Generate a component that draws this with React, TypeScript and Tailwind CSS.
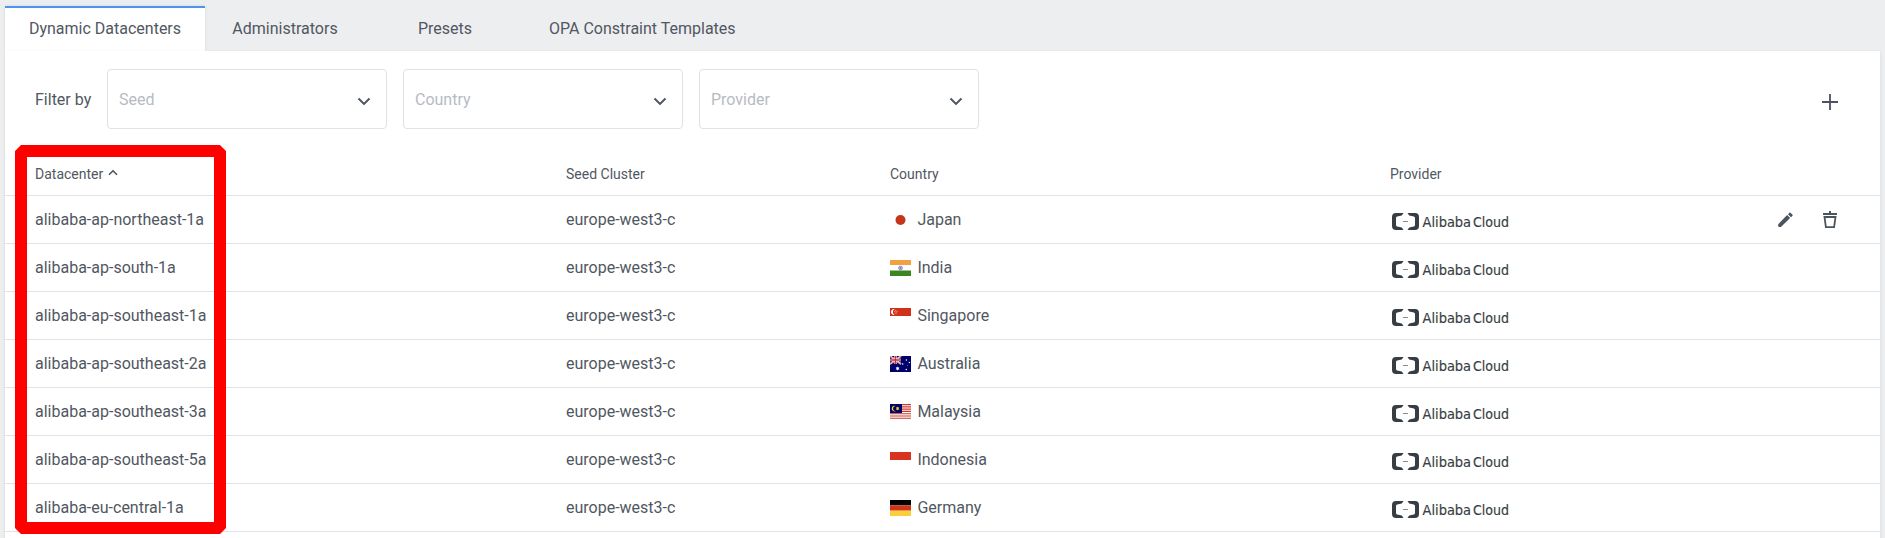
import React from "react";

const rows = [
  ["alibaba-ap-northeast-1a", "Japan"],
  ["alibaba-ap-south-1a", "India"],
  ["alibaba-ap-southeast-1a", "Singapore"],
  ["alibaba-ap-southeast-2a", "Australia"],
  ["alibaba-ap-southeast-3a", "Malaysia"],
  ["alibaba-ap-southeast-5a", "Indonesia"],
  ["alibaba-eu-central-1a", "Germany"],
];

const flags: Record<string, React.ReactNode> = {
  Japan: <circle cx="10.5" cy="8" r="5" fill="#c4351a" />,
  India: (
    <>
      <path d="M0 0h21v5H0z" fill="#f2a040" />
      <path d="M0 10.5h21V16H0z" fill="#3d8423" />
      <circle cx="10.5" cy="8" r="1.9" fill="#b9b9df" stroke="#7c7cc0" strokeWidth=".8" />
      <circle cx="10.5" cy="8" r=".6" fill="#4c4ca4" />
    </>
  ),
  Singapore: (
    <>
      <path d="M0 0h21v8H0z" fill="#cf3119" />
      <path d="M4.6 1.2a2.9 2.9 0 1 0 0 5.6a3.1 3.1 0 0 1 0-5.6z" fill="#fff" />
      <g fill="#f3c4bc">
        <circle cx="5.8" cy="2.3" r=".55" />
        <circle cx="4.8" cy="3.6" r=".5" />
        <circle cx="7" cy="3.6" r=".5" />
        <circle cx="5.2" cy="5" r=".5" />
        <circle cx="6.6" cy="5" r=".5" />
      </g>
    </>
  ),
  Australia: (
    <>
      <path d="M0 0h21v16H0z" fill="#00006b" />
      <path d="M0 0l11 8M11 0L0 8" stroke="#fff" strokeWidth="1.7" />
      <path d="M0 0l11 8M11 0L0 8" stroke="#d0434a" strokeWidth=".7" />
      <path d="M5.5 0v8M0 4h11" stroke="#fff" strokeWidth="2.4" />
      <path d="M5.5 0v8M0 4h11" stroke="#cf2b2e" strokeWidth="1.4" />
      <g fill="#fff">
        <path d="M7.6 10.4l.5 1.2 1.3-.3-.7 1.1.9.9-1.3.1-.7 1.2-.7-1.2-1.3-.1.9-.9-.7-1.1 1.3.3z" />
        <circle cx="16.3" cy="13.5" r=".75" />
        <circle cx="12.7" cy="8" r=".75" />
        <circle cx="16.4" cy="4" r=".75" />
        <circle cx="19.4" cy="6.6" r=".75" />
        <circle cx="17.5" cy="9.2" r=".4" />
      </g>
    </>
  ),
  Malaysia: (
    <>
      <path d="M0 0h21v16H0z" fill="#fff" />
      <path
        d="M0 .57h21M0 2.86h21M0 5.14h21M0 7.43h21M0 9.71h21M0 12h21M0 14.29h21"
        stroke="#c93a2e"
        strokeWidth="1.14"
      />
      <path d="M0 0h12v9.1H0z" fill="#00006b" />
      <path d="M5.8 1.9a2.9 2.9 0 1 0 0 5.3a2.5 2.5 0 1 1 0-5.3z" fill="#f5d21f" />
      <path d="M7.6 2.4l.5 1.1 1.2-.3-.6 1.3.7 1.2-1.3-.2-.5 1.1-.5-1.1-1.3.2.7-1.2-.6-1.3 1.2.3z" fill="#f5d21f" />
    </>
  ),
  Indonesia: <path d="M0 0h21v8H0z" fill="#d73321" />,
  Germany: (
    <>
      <path d="M0 0h21v5.33H0z" fill="#000" />
      <path d="M0 5.33h21v5.34H0z" fill="#d03417" />
      <path d="M0 10.67h21V16H0z" fill="#f9d03c" />
    </>
  ),
};

function AlibabaLogo() {
  return (
    <svg width="118" height="18" viewBox="0 0 118 18" className="mt-[5px] ml-0.5 block overflow-visible">
      <g fill="#373d41">
        <path d="M11.5 0H4Q0 0 0 4v9q0 4 4 4h7.500L9.800 14.500 5.200 13.500Q4 13.200 4 12V5q0-1.200 1.200-1.500l4.600-1z" />
        <path d="M15.500 0H23q4 0 4 4v9q0 4-4 4h-7.500l1.700-2.500 4.600-1q1.200-.3 1.200-1.500V5q0-1.200-1.200-1.500l-4.600-1z" />
        <path d="M11 8h5v1h-5z" opacity=".6" />
      </g>
      <g
        fontSize="16"
        fontFamily="'DejaVu Sans Condensed', 'DejaVu Sans', sans-serif"
        fill="#373d41"
        stroke="#373d41"
        strokeWidth=".15"
      >
        <text transform="translate(30.500 14) scale(.9 .92)" x="0" y="0" textLength="54" lengthAdjust="spacingAndGlyphs">
          Alibaba
        </text>
        <text transform="translate(81 14) scale(.9 .92)" x="0" y="0" textLength="40" lengthAdjust="spacingAndGlyphs">
          Cloud
        </text>
      </g>
    </svg>
  );
}

function Select({ label }: { label: string }) {
  return (
    <div className="flex h-[60px] w-[280px] items-center justify-between rounded-[4px] border border-[#e0e2e5] pr-[15px] pl-[11px] text-[#b7bbc2]">
      <span className="pt-0.5">{label}</span>
      <svg width="14" height="10" viewBox="0 0 14 10" className="mt-1.5">
        <path d="M1.5 1.5L7 7l5.5-5.5" fill="none" stroke="#4b535e" strokeWidth="1.9" />
      </svg>
    </div>
  );
}

const cols = "grid grid-cols-[531px_324px_500px_1fr] items-center pl-[30px]";

export default function App() {
  return (
    <div className="relative h-[538px] overflow-hidden bg-[#edeef0] px-[5px] pt-1.5 font-[Roboto,sans-serif] text-base text-[#515761]">
      <nav className="flex h-[45px] leading-6">
        <div className="flex w-[200px] justify-center border-t-2 border-[#4d94f0] bg-white pt-[9px] shadow-[0_0_3px_rgba(0,0,0,0.1)]">
          Dynamic Datacenters
        </div>
        <div className="flex w-40 justify-center pt-[11px]">Administrators</div>
        <div className="flex w-40 justify-center pt-[11px]">Presets</div>
        <div className="px-6 pt-[11px]">OPA Constraint Templates</div>
      </nav>
      <main className="relative h-[500px] bg-white shadow-[0_1px_3px_rgba(0,0,0,0.1)]">
        <div className="flex h-[96px] items-center pr-[42px] pl-[30px]">
          <span className="w-[72px] pt-0.5">Filter by</span>
          <div className="flex gap-4">
            <Select label="Seed" />
            <Select label="Country" />
            <Select label="Provider" />
          </div>
          <svg width="16" height="16" viewBox="0 0 16 16" className="mt-1.5 ml-auto">
            <path d="M8 0v16M0 8h16" stroke="#4b535e" strokeWidth="1.8" />
          </svg>
        </div>
        <div className={`${cols} h-[49px] border-b border-[#e0e2e5] pt-[5px] text-sm`}>
          <span className="flex items-center gap-[5px]">
            Datacenter
            <svg width="10" height="7" viewBox="0 0 10 7" className="-mt-[3px]">
              <path d="M1 5.800L5 1.800l4 4" fill="none" stroke="#4b535e" strokeWidth="1.600" />
            </svg>
          </span>
          <span>Seed Cluster</span>
          <span>Country</span>
          <span>Provider</span>
        </div>
        {rows.map(([name, country], i) => (
          <div key={name} className={`${cols} h-12 border-b border-[#e0e2e5]`}>
            <span>{name}</span>
            <span>europe-west3-c</span>
            <span className="flex items-center gap-[6.4px]">
              <svg width="21" height="16" viewBox="0 0 21 16" className="mt-px">
                {flags[country]}
              </svg>
              {country}
            </span>
            <div className="flex items-center justify-between pr-[42px]">
              <AlibabaLogo />
              {i === 0 && (
                <div className="flex items-center gap-[29px]">
                  <svg width="16" height="16" viewBox="0 0 16 16" fill="#4b535e">
                    <path d="M1.200 12.300v1.500q0 1.200 1.200 1.200h1.500L13.100 6 10.100 3zM11 2.200l3 3 1.500-1.500q.5-.5 0-1l-2-2q-.5-.5-1 0z" />
                  </svg>
                  <svg width="16" height="18" viewBox="0 0 16 18">
                    <path d="M7 0h2v2h6v2H1V2h6z" fill="#4b535e" />
                    <path d="M2.500 6h11l-1.400 10.200H3.900z" fill="none" stroke="#4b535e" strokeWidth="1.800" />
                  </svg>
                </div>
              )}
            </div>
          </div>
        ))}
      </main>
      <svg className="absolute top-[145px] left-[15px]" width="211" height="389" viewBox="0 0 211 389">
        <rect x="6" y="6" width="199" height="377" fill="none" stroke="#ff0000" strokeWidth="12" strokeLinejoin="bevel" />
      </svg>
    </div>
  );
}
